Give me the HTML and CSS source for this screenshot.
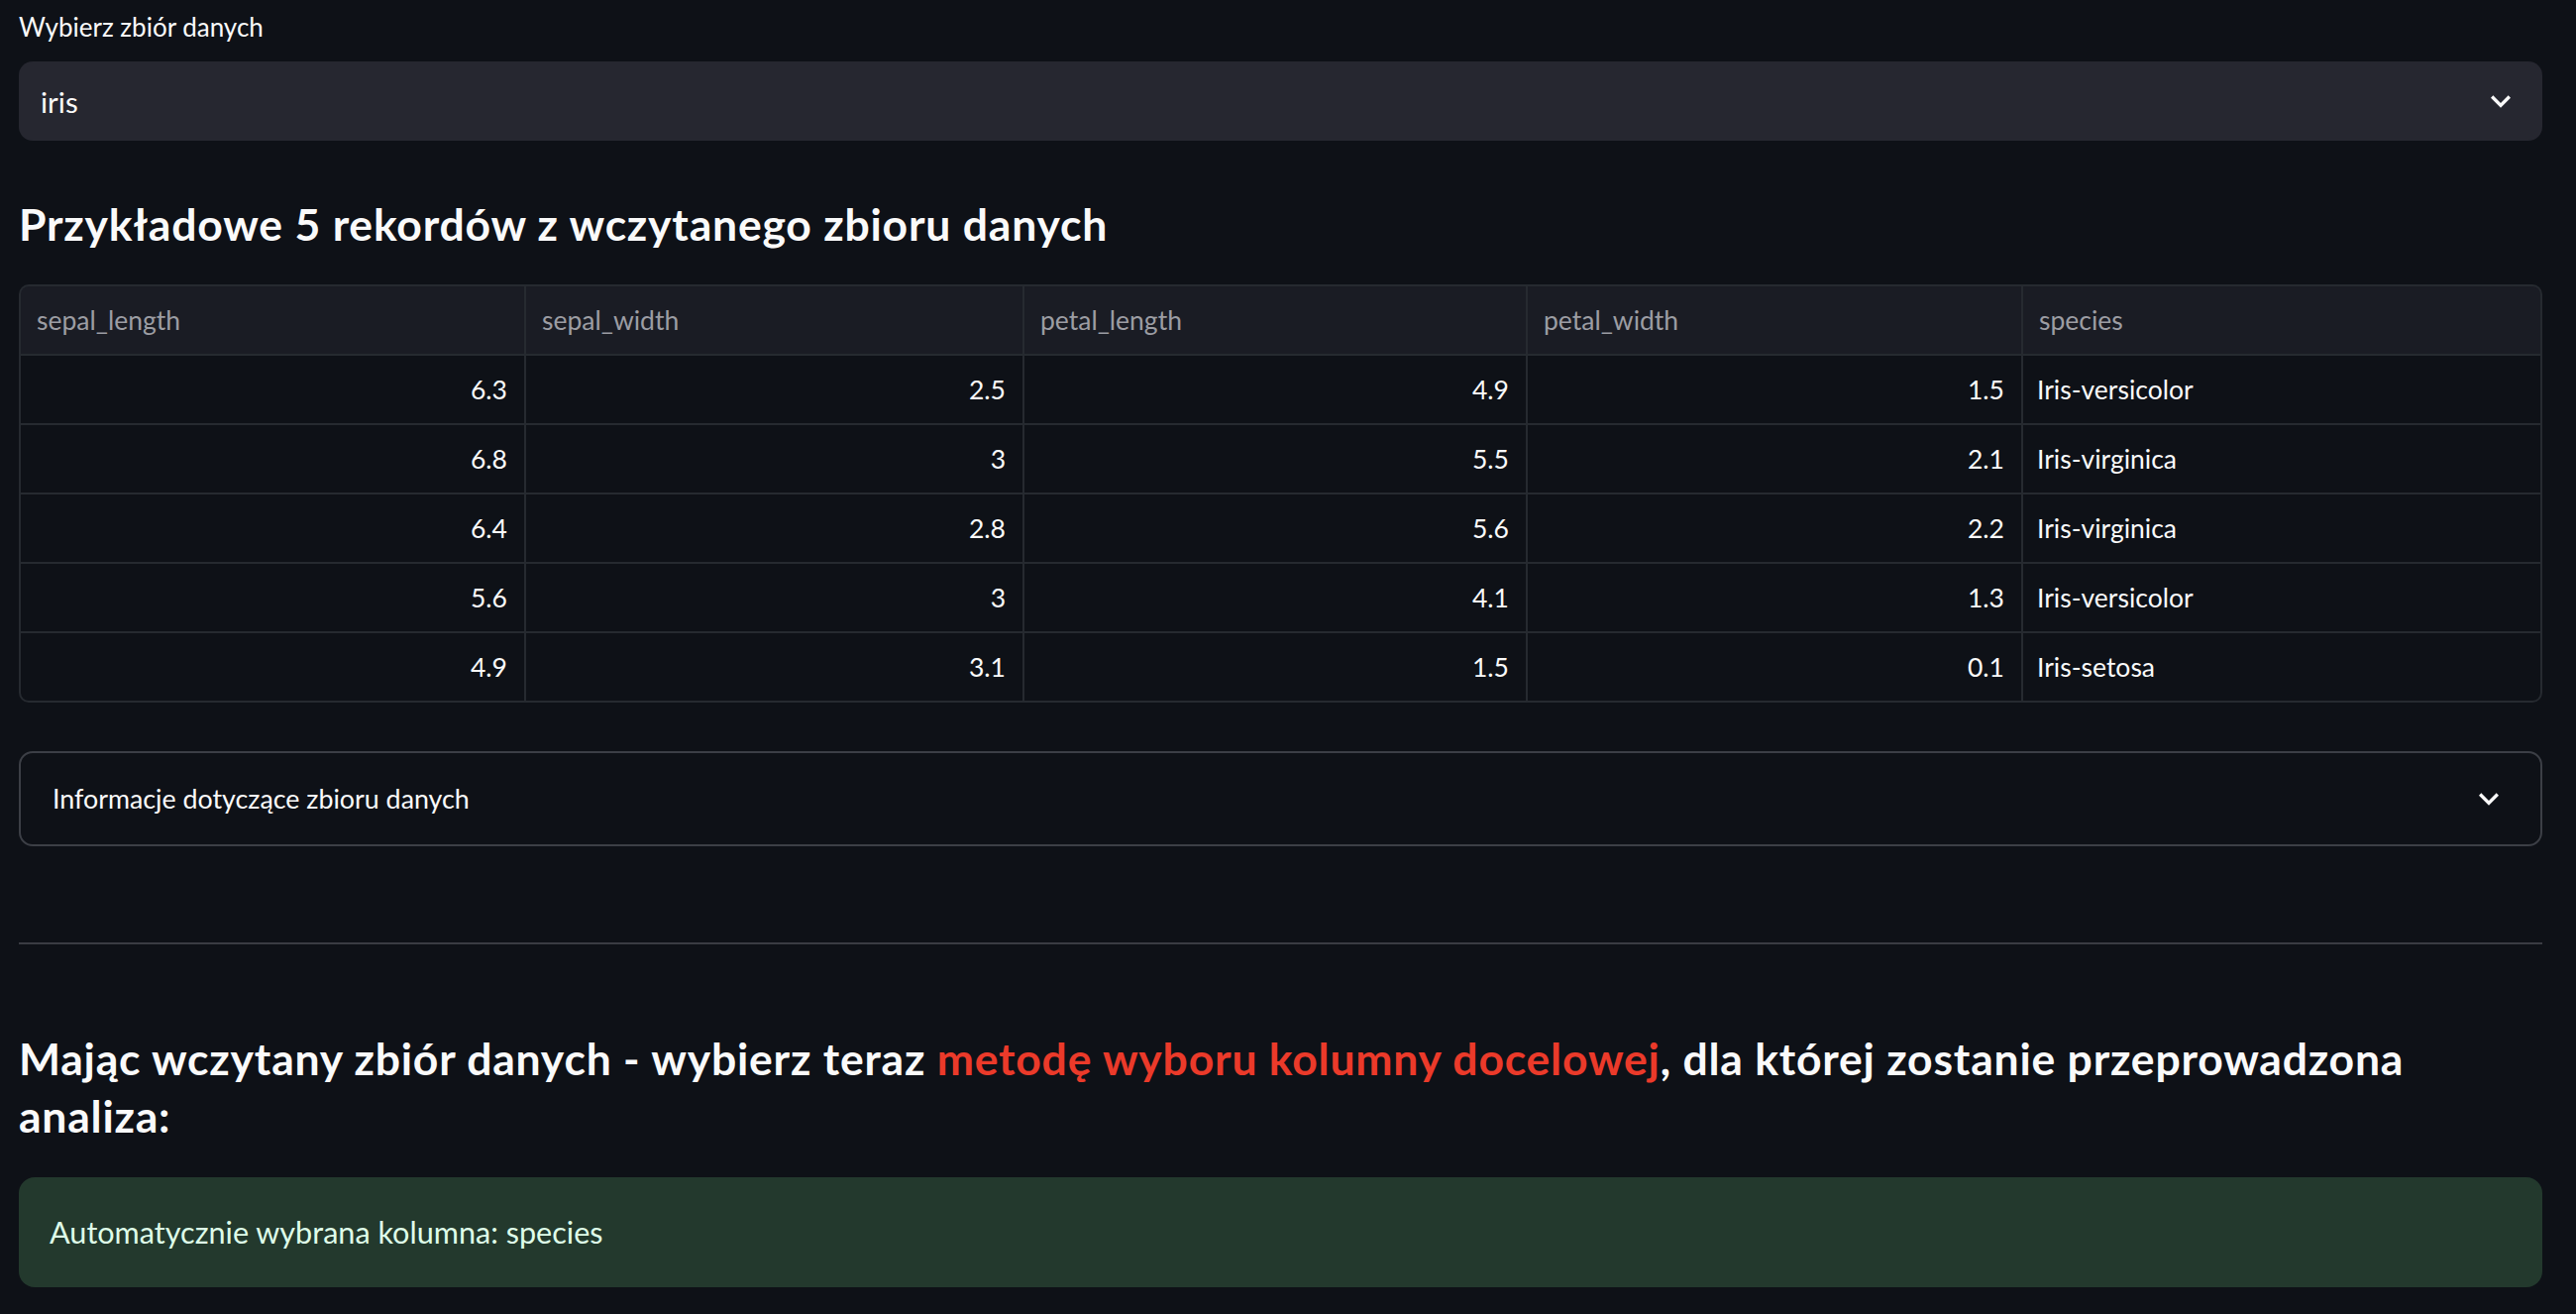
FILE: index.html
```html
<!DOCTYPE html>
<html lang="pl">
<head>
<meta charset="utf-8">
<title>Analiza zbioru danych</title>
<link rel="stylesheet" href="styles.css">
</head>
<body>
<main class="page">
  <div class="field">
    <label class="field-label">Wybierz zbiór danych</label>
    <div class="select">
      <span class="select-value">iris</span>
      <svg class="chev" viewBox="0 0 24 24"><path d="M7.41 8.59 12 13.17l4.59-4.58L18 10l-6 6-6-6 1.41-1.41z"/></svg>
    </div>
  </div>

  <h4 class="heading h-sample">Przykładowe 5 rekordów z wczytanego zbioru danych</h4>

  <div class="frame">
    <div class="grid">
      <div class="cell head">sepal_length</div>
      <div class="cell head">sepal_width</div>
      <div class="cell head">petal_length</div>
      <div class="cell head">petal_width</div>
      <div class="cell head">species</div>

      <div class="cell num">6.3</div><div class="cell num">2.5</div><div class="cell num">4.9</div><div class="cell num">1.5</div><div class="cell txt">Iris-versicolor</div>
      <div class="cell num">6.8</div><div class="cell num">3</div><div class="cell num">5.5</div><div class="cell num">2.1</div><div class="cell txt">Iris-virginica</div>
      <div class="cell num">6.4</div><div class="cell num">2.8</div><div class="cell num">5.6</div><div class="cell num">2.2</div><div class="cell txt">Iris-virginica</div>
      <div class="cell num">5.6</div><div class="cell num">3</div><div class="cell num">4.1</div><div class="cell num">1.3</div><div class="cell txt">Iris-versicolor</div>
      <div class="cell num">4.9</div><div class="cell num">3.1</div><div class="cell num">1.5</div><div class="cell num">0.1</div><div class="cell txt">Iris-setosa</div>
    </div>
  </div>

  <div class="expander">
    <span class="expander-title">Informacje dotyczące zbioru danych</span>
    <svg class="chev" viewBox="0 0 24 24"><path d="M7.41 8.59 12 13.17l4.59-4.58L18 10l-6 6-6-6 1.41-1.41z"/></svg>
  </div>

  <hr class="divider">

  <h4 class="heading h-method">Mając wczytany zbiór danych - wybierz teraz <span class="red">metodę wyboru kolumny docelowej</span>, dla której zostanie przeprowadzona analiza:</h4>

  <div class="alert">Automatycznie wybrana kolumna: species</div>
</main>
</body>
</html>
```

FILE: styles.css
```css
* { box-sizing: border-box; }

html, body {
  margin: 0;
  padding: 0;
  background: #0e1117;
  color: #fafafa;
  font-family: "Lato", "Noto Sans", sans-serif;
}

.page {
  display: flex;
  flex-direction: column;
  padding: 12px 34px 0 19px;
  min-height: 1326px;
}

.field { display: flex; flex-direction: column; }

.field-label {
  font-size: 26px;
  line-height: 31px;
  color: #fafafa;
  margin-bottom: 19px;
}

.select {
  height: 80px;
  background: #262730;
  border-radius: 14px;
  display: flex;
  align-items: center;
  justify-content: space-between;
  padding: 0 22px 0 22px;
}

.select-value {
  font-size: 29.5px;
  color: #fafafa;
}

.chev {
  width: 40px;
  height: 40px;
  fill: #fafafa;
  flex: none;
}

.heading {
  margin: 0;
  font-size: 44.5px;
  font-weight: 700;
  letter-spacing: 0.78px;
  color: #fafafa;
}

.h-sample {
  margin-top: 57px;
  line-height: 53px;
}

.frame {
  margin-top: 35px;
  border: 2px solid #262a30;
  border-radius: 10px;
  overflow: hidden;
  background: #262a30;
}

.grid {
  display: grid;
  grid-template-columns: 508px 501px 506px 498px 1fr;
  grid-auto-rows: 68px;
  gap: 2px;
}

.cell {
  background: #0e1117;
  display: flex;
  align-items: center;
  padding: 0 17px 0 16px;
  font-size: 26.5px;
  color: #fafafa;
}

.cell.head {
  background: #1a1c24;
  color: #9c9da3;
}

.cell.num { justify-content: flex-end; }
.cell.txt { padding-left: 14px; }

.expander {
  margin-top: 49px;
  height: 96px;
  border: 2px solid #3c3f46;
  border-radius: 14px;
  display: flex;
  align-items: center;
  justify-content: space-between;
  padding: 0 32px 0 32px;
}

.expander-title {
  font-size: 26.8px;
  color: #fafafa;
}

.divider {
  margin: 97px 0 0 0;
  border: 0;
  height: 2px;
  background: #3a3c43;
}

.h-method {
  margin-top: 86px;
  line-height: 58px;
}

.red { color: #eb3a2a; }

.alert {
  margin-top: 33px;
  height: 111px;
  background: #23392d;
  border-radius: 16px;
  display: flex;
  align-items: center;
  padding: 0 31px;
  font-size: 30.6px;
  color: #dffde9;
}
```
